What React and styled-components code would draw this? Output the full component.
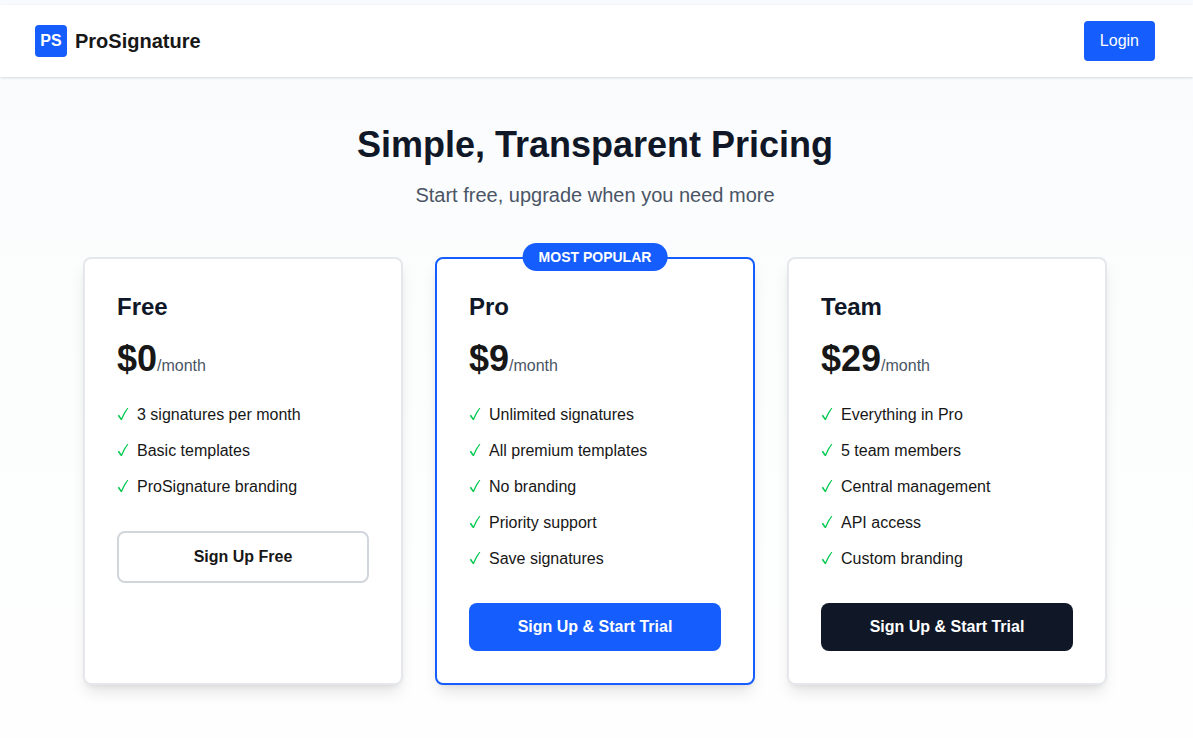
import React from 'react'
import styled, { createGlobalStyle } from 'styled-components'

const plans = [
    {
        name: 'Free',
        price: '$0',
        features: ['3 signatures per month', 'Basic templates', 'ProSignature branding'],
        cta: 'Sign Up Free',
        variant: 'outline',
    },
    {
        name: 'Pro',
        price: '$9',
        features: ['Unlimited signatures', 'All premium templates', 'No branding', 'Priority support', 'Save signatures'],
        cta: 'Sign Up & Start Trial',
        variant: 'primary',
        popular: true,
    },
    {
        name: 'Team',
        price: '$29',
        features: ['Everything in Pro', '5 team members', 'Central management', 'API access', 'Custom branding'],
        cta: 'Sign Up & Start Trial',
        variant: 'dark',
    },
]

const CheckMark = () => (
    <Check viewBox='0 0 12 24' aria-hidden='true'>
        <path d='M0.7 12.7 L2.1 11.8 L4.3 15.3 Q6.8 9.2 10.2 5 L11.4 5 Q7.6 10.4 5 17 L3.8 17 Z' />
    </Check>
)

const App = () => {
    return (
        <Page>
            <GlobalStyle />
            <Header>
                <Brand href='#home'>
                    <Logo>PS</Logo>
                    ProSignature
                </Brand>
                <LoginButton type='button'>Login</LoginButton>
            </Header>

            <Main>
                <Title>Simple, Transparent Pricing</Title>
                <Subtitle>Start free, upgrade when you need more</Subtitle>

                <Cards>
                    {plans.map((plan) => (
                        <Card key={plan.name} $popular={plan.popular}>
                            {plan.popular && <Badge>MOST POPULAR</Badge>}
                            <PlanName>{plan.name}</PlanName>
                            <Price>{plan.price}<span>/month</span></Price>
                            <Features>
                                {plan.features.map((feature) => (
                                    <li key={feature}><CheckMark />{feature}</li>
                                ))}
                            </Features>
                            <PlanButton type='button' $variant={plan.variant}>{plan.cta}</PlanButton>
                        </Card>
                    ))}
                </Cards>
            </Main>
        </Page>
    )
}

export default App

const GlobalStyle = createGlobalStyle`
    *{
        box-sizing:border-box;
    }

    body{
        margin:0;
        color:#171717;
        font-family:"Liberation Sans", Arial, sans-serif;
        font-size:16px;
        line-height:24px;
    }

    h1, h2, p, ul{
        margin:0;
        padding:0;
    }

    button{
        font:inherit;
        cursor:pointer;
    }
`

const Page = styled.div`
    min-height:100vh;
    padding-top:5px;
    background:linear-gradient(to bottom, #f9fafd, #fcfefd 50%, #fefefe);
`

const Header = styled.header`
    display:flex;
    justify-content:space-between;
    align-items:center;
    padding:16px 38px 16px 35px;
    background:#ffffff;
    box-shadow:0 1px 3px rgba(0,0,0,0.1), 0 1px 2px -1px rgba(0,0,0,0.1);
`

const Brand = styled.a`
    display:flex;
    align-items:center;
    gap:8px;
    color:#171717;
    font-size:20px;
    font-weight:bold;
    line-height:28px;
    text-decoration:none;
`

const Logo = styled.span`
    display:flex;
    justify-content:center;
    align-items:center;
    width:32px;
    height:32px;
    border-radius:4px;
    background:#155dfc;
    color:#ffffff;
    font-size:16px;
`

const LoginButton = styled.button`
    padding:8px 16px;
    border:none;
    border-radius:4px;
    background:#155dfc;
    color:#ffffff;
`

const Main = styled.main`
    padding:48px 35px 48px 32px;
    text-align:center;
`

const Title = styled.h1`
    margin-bottom:16px;
    color:#101828;
    font-size:36px;
    font-weight:bold;
    line-height:40px;
`

const Subtitle = styled.p`
    margin-bottom:48px;
    color:#4a5565;
    font-size:20px;
    line-height:28px;
`

const Cards = styled.div`
    display:grid;
    grid-template-columns:repeat(3, 1fr);
    gap:32px;
    max-width:1024px;
    margin:0 auto;
    text-align:left;

    @media(max-width:767px){
        grid-template-columns:1fr;
    }
`

const Card = styled.section`
    position:relative;
    padding:32px;
    border:2px solid ${({ $popular }) => ($popular ? '#155dfc' : '#e5e7eb')};
    border-radius:8px;
    background:#ffffff;
    box-shadow:0 10px 15px -3px rgba(0,0,0,0.1), 0 4px 6px -4px rgba(0,0,0,0.1);
`

const Badge = styled.span`
    position:absolute;
    top:-16px;
    left:50%;
    transform:translateX(-50%);
    padding:4px 16px;
    border-radius:14px;
    background:#155dfc;
    color:#ffffff;
    font-size:14px;
    font-weight:bold;
    line-height:20px;
    white-space:nowrap;
`

const PlanName = styled.h2`
    margin-bottom:16px;
    color:#101828;
    font-size:24px;
    font-weight:bold;
    line-height:32px;
`

const Price = styled.p`
    margin-bottom:24px;
    font-size:36px;
    font-weight:bold;
    line-height:40px;

    span{
        color:#4a5565;
        font-size:16px;
        font-weight:normal;
        line-height:24px;
    }
`

const Features = styled.ul`
    display:flex;
    flex-direction:column;
    gap:12px;
    margin-bottom:32px;
    list-style:none;

    li{
        display:flex;
        align-items:center;
        gap:8px;
    }
`

const Check = styled.svg`
    flex:none;
    width:12px;
    height:24px;
    fill:#00c950;
`

const variants = {
    outline: { background: '#ffffff', color: '#171717', border: '2px solid #d1d5dc' },
    primary: { background: '#155dfc', color: '#ffffff', border: 'none' },
    dark: { background: '#101828', color: '#ffffff', border: 'none' },
}

const PlanButton = styled.button`
    width:100%;
    padding:12px 24px;
    border:${({ $variant }) => variants[$variant].border};
    border-radius:8px;
    background:${({ $variant }) => variants[$variant].background};
    color:${({ $variant }) => variants[$variant].color};
    font-weight:bold;
`
